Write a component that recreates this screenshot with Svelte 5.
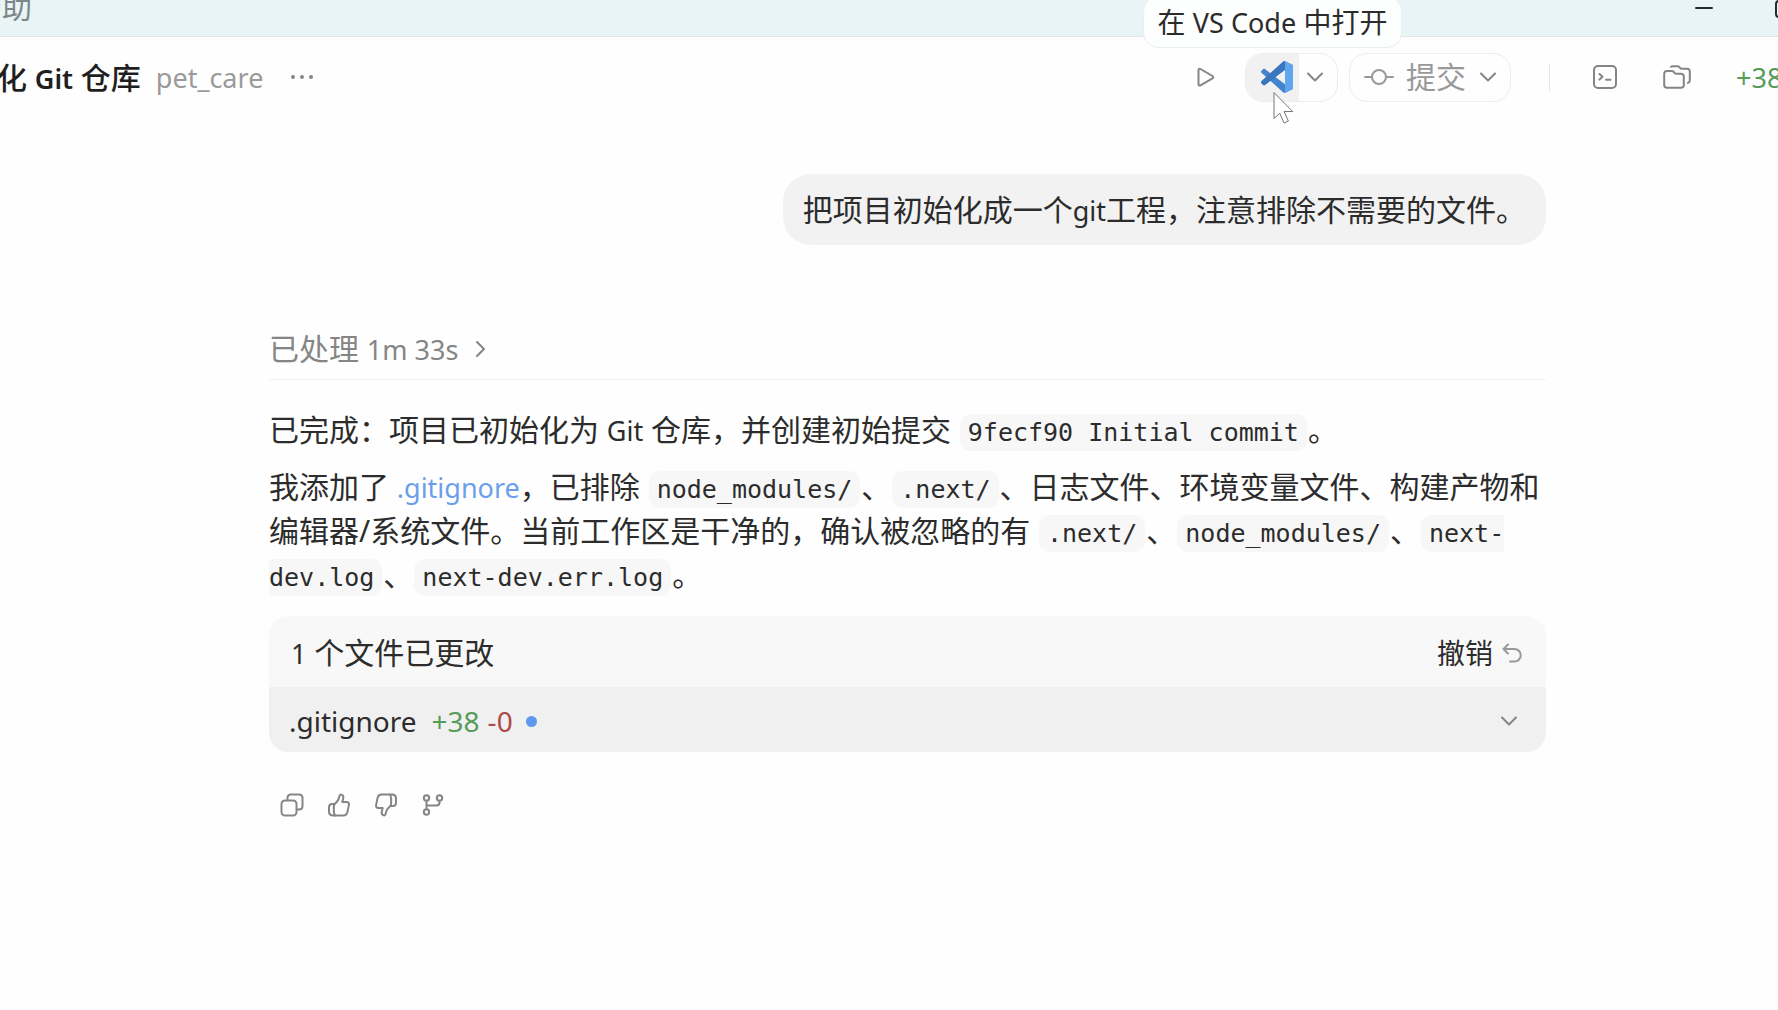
<script lang="ts">
  const project = 'pet_care';
  const file = { name: '.gitignore', added: 38, removed: 0 };

  let expanded = $state(false);
</script>

{#snippet chevron()}
  <svg class="chevron" viewBox="0 0 16 16" width="16" height="16" aria-hidden="true">
    <path d="M1 4.5l7 7 7-7" />
  </svg>
{/snippet}

<div class="app">
  <div class="titlebar">
    <button class="menu">帮助</button>
    <div class="window-controls">
      <button aria-label="最小化">
        <svg viewBox="0 0 18 18" width="18" height="18"><path d="M1 9h16" /></svg>
      </button>
      <button aria-label="最大化">
        <svg viewBox="0 0 18 18" width="18" height="18"><rect x="1" y="1" width="16" height="16" rx="3" /></svg>
      </button>
    </div>
  </div>

  <header class="header">
    <h1>化 <span class="latin">Git</span> 仓库</h1>
    <span class="project latin">{project}</span>
    <button class="icon-btn more" aria-label="更多">
      <svg viewBox="0 0 22 6" width="22" height="6">
        <circle cx="2" cy="3" r="2" /><circle cx="11" cy="3" r="2" /><circle cx="20" cy="3" r="2" />
      </svg>
    </button>

    <div class="tools">
      <button class="icon-btn run" aria-label="运行">
        <svg viewBox="0 0 18 22" width="18" height="22">
          <path d="M1.500 3.800v14.400c0 1.200 1 1.700 2 1.200l12-7c1-.6 1-1.800 0-2.400l-12-7c-1-.6-2-.1-2 .8z" />
        </svg>
      </button>

      <div class="split">
        <div class="open-wrap">
          <button class="open" aria-label="在 VS Code 中打开">
            <svg viewBox="0 0 100 100" width="32" height="32">
              <path class="vs-mid" fill-rule="evenodd" d="M70.900 99.300C72.500 99.900 74.300 99.900 75.900 99.100L96.500 89.200C98.600 88.200 100 86 100 83.600V16.400C100 14 98.600 11.800 96.500 10.800L75.900.9C73.800-.1 71.300.1 69.500 1.400L68.800 2.100 29.400 38 12.200 25C10.600 23.800 8.400 23.900 6.900 25.200L1.400 30.300C-.5 31.900-.5 34.800 1.400 36.400L16.200 50 1.400 63.600C-.5 65.200-.5 68.100 1.400 69.700L6.900 74.800C8.400 76.100 10.600 76.200 12.200 75L29.400 62 68.800 97.900C69.400 98.500 70.100 99 70.900 99.300ZM75 27.300L45.100 50 75 72.700V27.300Z" />
              <path class="vs-dark" d="M1.400 63.600L68.800 2.100C71.300-.5 75 1.200 75 4.400V27.300L12.200 75C10.600 76.200 8.400 76.100 6.900 74.800L1.400 69.700C-.5 68.100-.5 65.200 1.400 63.600Z" />
              <path class="vs-light" d="M75.900.9L96.500 10.800C98.600 11.800 100 14 100 16.400V83.600C100 86 98.600 88.200 96.500 89.200L75.900 99.100C73.500 100.200 71 99.900 69 98.200 71.300 100.500 75 98.800 75 95.600V4.400C75 1.200 71.300-.5 69 1.800 71 .1 73.500-.3 75.900.9Z" />
            </svg>
          </button>
          <div class="tooltip" role="tooltip">在 <span class="latin">VS Code</span> 中打开</div>
          <svg class="cursor" viewBox="0 0 22 33" width="22" height="33" aria-hidden="true">
            <path d="M1 1v25.500l5.700-5.300 4.300 9.800 4.400-1.900-4.300-9.600h8.200z" />
          </svg>
        </div>
        <button class="drop" aria-label="选择编辑器">{@render chevron()}</button>
      </div>

      <button class="commit">
        <svg viewBox="0 0 30 18" width="30" height="18" aria-hidden="true">
          <circle cx="15" cy="9" r="7" /><path d="M1 9h7M22 9h7" />
        </svg>
        提交
        {@render chevron()}
      </button>

      <span class="rule"></span>

      <button class="icon-btn terminal" aria-label="终端">
        <svg viewBox="0 0 24 24" width="24" height="24">
          <rect x="1" y="1" width="22" height="22" rx="4" />
          <path d="M6.500 9l3 2.800-3 2.800M13 14.800h4.500" />
        </svg>
      </button>
      <button class="icon-btn folders" aria-label="文件">
        <svg viewBox="0 0 28 24" width="28" height="24">
          <path d="M1.200 9v11c0 1.800 1 2.800 2.800 2.800h14c1.800 0 2.800-1 2.800-2.800v-8.500c0-1.800-1-2.800-2.800-2.800h-4.500c-1 0-1.500-.3-2-.9l-.7-.8c-.5-.6-1-.9-2-.9H4c-1.800 0-2.800 1-2.800 2.900z" />
          <path d="M8 1.800c.5-.4 1-.6 1.800-.6h4.600c.9 0 1.500.3 2 .9l.7.800c.5.6 1 .9 2 .9H24c1.800 0 2.800 1 2.800 2.800v8.600c0 1.500-.7 2.400-2 2.700" />
        </svg>
      </button>
      <span class="stats latin added">+{file.added}</span>
    </div>
  </header>

  <main class="thread">
    <div class="bubble">把项目初始化成一个<span class="latin">git</span>工程，注意排除不需要的文件。</div>

    <button class="processed">
      <span>已处理 <span class="latin">1m 33s</span></span>
      <svg viewBox="0 0 10 18" width="10" height="18" aria-hidden="true"><path d="M1 2l7 7-7 7" /></svg>
    </button>

    <section class="answer">
      <p>已完成：项目已初始化为 <span class="latin">Git</span> 仓库，并创建初始提交 <code>9fecf90 Initial commit</code>。</p>
      <p>
        我添加了 <a class="latin" href="#gitignore">{file.name}</a>，已排除 <code>node_modules/</code>、<code>.next/</code>、日志文件、环境变量文件、构建产物和编辑器/系统文件。当前工作区是干净的，确认被忽略的有 <code>.next/</code>、<code>node_modules/</code>、<code>next-dev.log</code>、<code>next-dev.err.log</code>。
      </p>
    </section>

    <section class="changes" id="gitignore">
      <div class="changes-head">
        <span><span class="latin">1</span> 个文件已更改</span>
        <button class="undo">
          撤销
          <svg viewBox="0 0 20 20" width="20" height="20" aria-hidden="true">
            <path d="M6 1.500L1.500 6 6 10.500M1.500 6H12.500a6 6 0 0 1 0 12.500H8" />
          </svg>
        </button>
      </div>
      <button class="file-row" aria-expanded={expanded} onclick={() => (expanded = !expanded)}>
        <span class="file-name">{file.name}</span>
        <span class="added">+{file.added}</span>
        <span class="removed">-{file.removed}</span>
        <span class="dot"></span>
        {@render chevron()}
      </button>
    </section>

    <div class="actions">
      <button class="icon-btn" aria-label="复制">
        <svg viewBox="0 0 24 24" width="24" height="24">
          <rect x="1.500" y="7.500" width="15" height="15" rx="3.500" />
          <path d="M7.500 7V5c0-2 1.300-3.500 3.500-3.500h8c2.200 0 3.500 1.300 3.500 3.500v8c0 2.200-1.300 3.500-3.500 3.500h-2" />
        </svg>
      </button>
      <button class="icon-btn" aria-label="赞">
        <svg viewBox="0 0 24 24" width="24" height="24">
          <path d="M7.500 11c2.800-2 4.300-4.500 4.800-7.500.3-1.500 1-2.200 2-1.900 1.700.5 2.300 2.100 1.900 3.900L15.300 9h4.200c1.900 0 2.800 1.300 2.400 3.100l-1.500 7c-.5 2.200-1.700 3.400-4 3.400H6c-2.700 0-4-1.500-4-4v-4c0-2 1-3.500 3-3.500z" />
          <path d="M7.500 11c-.5 1-.7 2.300-.7 4.500v2c0 2 .3 3.500 1.200 5" />
        </svg>
      </button>
      <button class="icon-btn" aria-label="踩">
        <svg class="flip" viewBox="0 0 24 24" width="24" height="24">
          <path d="M7.500 11c2.800-2 4.300-4.500 4.800-7.500.3-1.500 1-2.200 2-1.900 1.700.5 2.300 2.100 1.900 3.900L15.300 9h4.200c1.900 0 2.800 1.300 2.400 3.100l-1.500 7c-.5 2.200-1.700 3.400-4 3.400H6c-2.700 0-4-1.500-4-4v-4c0-2 1-3.500 3-3.500z" />
          <path d="M7.500 11c-.5 1-.7 2.300-.7 4.500v2c0 2 .3 3.500 1.200 5" />
        </svg>
      </button>
      <button class="icon-btn" aria-label="分支">
        <svg viewBox="0 0 24 24" width="24" height="24">
          <circle cx="5.500" cy="5" r="2.700" />
          <circle cx="18.500" cy="5" r="2.700" />
          <circle cx="5.500" cy="19" r="2.700" />
          <path d="M5.500 7.700v8.600M5.500 12.500h10c2 0 3-1 3-2.800v-2" />
        </svg>
      </button>
    </div>
  </main>
</div>

<style>
  :global(body) { background: #fefefe; }

  .app {
    font-family: "Noto Sans", "Noto Sans CJK SC", sans-serif;
    font-size: 30px; line-height: 44px; color: #2c2c2c;
    overflow: hidden;
  }
  .latin { font-size: 27px; line-height: 30px; }
  .added { color: #559c59; }
  .removed { color: #ac4a4a; }

  button {
    font: inherit; color: inherit; background: none; border: 0;
    padding: 0; cursor: pointer;
  }
  svg {
    display: block; flex-shrink: 0; fill: none; stroke: currentColor;
    stroke-width: 2; stroke-linecap: round; stroke-linejoin: round;
  }

  .titlebar {
    display: flex; justify-content: space-between; align-items: flex-start;
    height: 36px; background: #e8f4f6; border-bottom: 1px solid #dde7e8;
  }
  .menu { margin: -15px 0 0 -28px; color: #7d8788; }
  .window-controls {
    display: flex; gap: 62px; margin-right: -15px; color: #222b2c;
  }
  .window-controls button:first-child { margin-top: -2px; }

  .header { display: flex; align-items: center; height: 80px; }
  h1 {
    margin: 0 0 0 -3px; padding-top: 2px; font-size: 30px; font-weight: 500;
    color: #1f1f1f; white-space: nowrap;
  }
  h1 .latin { font-weight: 600; }
  .project { margin-left: 15px; padding-top: 2px; color: #9a9a9a; }
  .icon-btn { color: #858585; }
  .more { margin-left: 28px; }
  .more svg { fill: currentColor; stroke: none; }

  .tools {
    display: flex; align-items: center; margin-left: auto; flex-shrink: 0;
  }
  .chevron { color: #858585; }
  .run { margin-right: 30px; }

  .split, .commit {
    display: flex; align-items: center; box-sizing: border-box; height: 49px;
    border: 1px solid #ededed; border-radius: 18px;
  }
  .open-wrap { position: relative; height: 100%; }
  .open {
    display: flex; align-items: center; justify-content: center;
    width: 53px; height: 100%; padding-left: 8px; background: #f1f1f1;
    border-radius: 17px 0 0 17px;
  }
  .open svg { stroke: none; }
  .vs-dark { fill: #3a76bd; }
  .vs-mid { fill: #4484cc; }
  .vs-light { fill: #5fa6ee; }
  .drop {
    display: flex; align-items: center; width: 38px; height: 100%;
    padding-left: 8px;
  }

  .tooltip {
    position: absolute; left: 50%; bottom: calc(100% + 6px); z-index: 2;
    transform: translateX(-50%);
    padding: 3px 14px; border: 1px solid #eceeee; border-radius: 15px;
    background: #fdfefe; color: #2c2c2c; font-size: 28px; white-space: nowrap;
  }
  .cursor {
    position: absolute; left: 27px; top: 38px; z-index: 2;
    fill: #fff; color: #777; stroke-width: 1;
  }

  .commit { gap: 12px; margin-left: 11px; padding: 0 14px; color: #999; }
  .commit .chevron { margin-left: 2px; }
  .rule { width: 1px; height: 28px; margin-left: 38px; background: #e6e6e6; }
  .terminal { margin-left: 43px; }
  .folders { margin-left: 46px; }
  .stats { width: 42px; margin-left: 45px; padding-top: 2px; }

  .thread {
    display: flex; flex-direction: column;
    padding: 57px 232px 0 269px;
  }
  .bubble {
    align-self: flex-end; padding: 14px 20px 13px; border-radius: 28px;
    background: #f2f2f2;
  }
  .processed {
    display: flex; align-items: center; gap: 18px; margin-top: 82px;
    padding-bottom: 8px; border-bottom: 1px solid #f2f2f2; color: #858585;
  }

  .answer { margin-top: 28px; }
  p { margin: 0 0 13px; }
  a { color: #6b9fec; text-decoration: none; }
  code {
    margin: 0 1px; padding: 4px 8px; border-radius: 11px; background: #f7f7f7;
    font-family: "DejaVu Sans Mono", monospace; font-size: 25px; line-height: 30px;
  }

  .changes {
    margin-top: 6px; border-radius: 20px; overflow: hidden; background: #f8f8f8;
  }
  .changes-head, .file-row {
    display: flex; align-items: center; box-sizing: border-box;
  }
  .changes-head {
    justify-content: space-between; height: 71px; padding: 3px 24px 0 22px;
  }
  .undo { display: flex; align-items: center; gap: 9px; font-size: 28px; }
  .undo svg { color: #999; }
  .file-row {
    width: 100%; height: 65px; padding: 3px 29px 0 20px; background: #f0f0f0;
    font-size: 28px;
  }
  .file-name { margin-right: 15px; }
  .removed { margin-left: 8px; }
  .dot {
    width: 11px; height: 11px; margin-left: 13px; border-radius: 50%;
    background: #5f98f0;
  }
  .file-row .chevron { margin-left: auto; }

  .actions { display: flex; gap: 23px; margin: 41px 0 0 11px; }
  .flip { transform: rotate(180deg); }
</style>
